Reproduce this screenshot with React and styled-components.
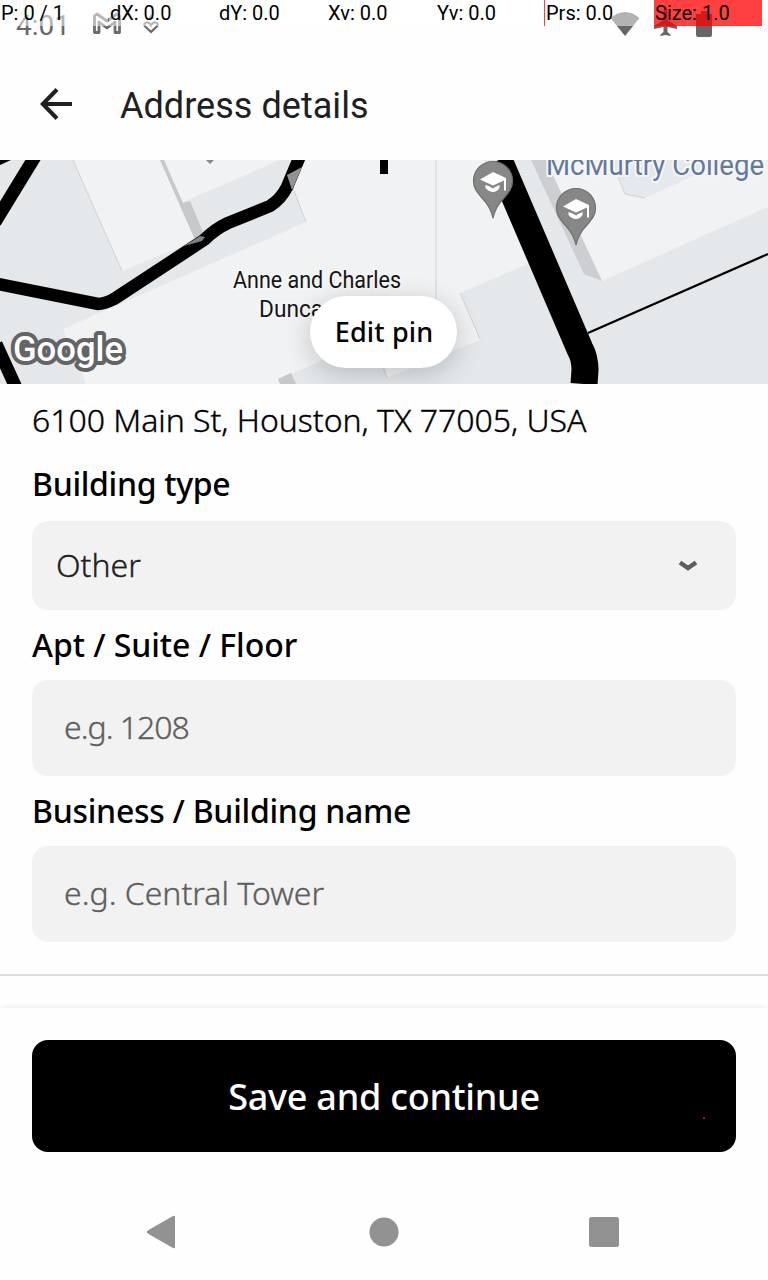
import React from "react";
import styled, { createGlobalStyle } from "styled-components";

const Global = createGlobalStyle`
  * { box-sizing: border-box; }
  body { margin: 0; background: #fefefe; }
  button { font: inherit; border: 0; margin: 0; padding: 0; }
`;

const Screen = styled.div`
  width: 768px;
  height: 1280px;
  display: flex;
  flex-direction: column;
  position: relative;
  overflow: hidden;
  background: #fefefe;
  color: #000;
  font-family: "Noto Sans", "Open Sans", sans-serif;
`;

const StatusBar = styled.div`
  height: 48px;
  display: flex;
  align-items: flex-start;
  justify-content: space-between;
  flex: none;
  padding: 0 54px 0 16px;
  color: #666;
`;

const StatusGroup = styled.div`
  display: flex;
  align-items: flex-start;
`;

const Clock = styled.span`
  font: 400 28px/33px Roboto, sans-serif;
  width: 76px;
  padding-top: 9px;
`;

const PointerBar = styled.div`
  position: absolute;
  inset: 0 0 auto 0;
  height: 26px;
  display: flex;
  gap: 1px;
`;

const PointerCell = styled.div`
  width: 108px;
  height: 26px;
  padding: 1px 0 0 1px;
  background: ${(p) => (p.$hot ? "rgba(255,0,0,.75)" : "rgba(255,255,255,.5)")};
  box-shadow: ${(p) => (p.$edge ? "-1px 0 0 #ff4040" : "none")};
  font: 400 20px/24px Roboto, sans-serif;
  white-space: nowrap;
`;

const Header = styled.header`
  height: 112px;
  flex: none;
  display: flex;
  align-items: center;
  padding: 0 40px;
  gap: 48px;
`;

const Title = styled.h1`
  margin: 4px 0 0;
  font: 400 36px/42px Roboto, sans-serif;
  letter-spacing: 0.04px;
  color: #202020;
`;

const MapView = styled.section`
  height: 224px;
  flex: none;
  position: relative;
  overflow: hidden;
  display: flex;
  justify-content: center;
  align-items: flex-end;
  padding: 0 1px 16px 0;
`;

const MapDrawing = styled.svg`
  position: absolute;
  inset: 0;
  display: block;
`;

const EditPin = styled.button`
  position: relative;
  width: 147px;
  height: 72px;
  padding: 0 0 2px 1px;
  border-radius: 36px;
  background: #fff;
  box-shadow: 0 6px 28px rgba(0, 0, 0, 0.2);
  font-size: 27px;
  font-weight: 500;
  letter-spacing: 0.15px;
  color: #000;
`;

const Form = styled.main`
  flex: none;
  height: 592px;
  padding: 14px 32px 0;
  display: flex;
  flex-direction: column;
  border-bottom: 2px solid #dedede;
`;

const Address = styled.p`
  margin: 0 0 20px;
  font-size: 32px;
  line-height: 44px;
  font-weight: 300;
  letter-spacing: -0.03px;
  -webkit-text-stroke: 0.35px currentColor;
  white-space: nowrap;
`;

const Label = styled.label`
  display: block;
  height: 44px;
  font-size: 32px;
  line-height: 44px;
  font-weight: 500;
  letter-spacing: ${(p) => p.$track};
  white-space: nowrap;
`;

const Field = styled.div`
  height: ${(p) => p.$height}px;
  margin: ${(p) => p.$margin};
  padding: ${(p) => p.$pad};
  border-radius: 16px;
  background: #f2f2f2;
  color: ${(p) => p.$color};
  display: flex;
  align-items: center;
  justify-content: space-between;
  font-size: 32px;
  font-weight: 300;
  letter-spacing: ${(p) => p.$track};
  -webkit-text-stroke: 0.35px currentColor;
`;

const Footer = styled.footer`
  flex: none;
  height: 184px;
  margin-top: 32px;
  padding: 32px;
  box-shadow: 0 -3px 4px -1px rgba(0, 0, 0, 0.06);
`;

const SaveButton = styled.button`
  display: block;
  width: 704px;
  height: 112px;
  border-radius: 16px;
  background: #000;
  color: #fff;
  font-size: 36px;
  font-weight: 500;
  letter-spacing: -0.24px;
`;

const TouchDot = styled.i`
  position: absolute;
  left: 703px;
  top: 1117px;
  width: 2px;
  height: 2px;
  background: #a51414;
`;

const NavBar = styled.nav`
  flex: 1;
  display: flex;
  justify-content: space-between;
  align-items: center;
  padding: 0 149px 8px 147px;
`;

function Pin({ x, y }) {
  return (
    <g transform={`translate(${x} ${y})`}>
      <path d="M0 36C-2 27-5 22-11 16C-16 10-19.500 6-19.500-1A19.500 19.500 0 0 1 19.500-1C19.500 6 16 10 11 16C5 22 2 27 0 36Z" fill="#878787" stroke="#6f6f6f" strokeWidth="1.200" />
      <path d="M-13-2.500L0-10L13-4V8.500H11V-1.500L0 3.500Z" fill="#fff" />
      <path d="M-7.500 3Q-4 3.500 0 6.500Q3 4 6.500 3V6Q4 10 0 10T-7.500 6Z" fill="#fff" />
    </g>
  );
}

function CampusMap() {
  return (
    <MapDrawing width="768" height="224" viewBox="0 160 768 224">
      <rect y="160" width="768" height="224" fill="#f1f2f4" />
      {/* lawns */}
      <path d="M0 160H73L122 271L204 237L183 202L280 160H303L288 175L306 222L63 329L86 384H0Z" fill="#e4e8eb" />
      <path d="M278 379L385 337L480 340L460 293L529 263L484 160H535L602 281L768 207V384H280Z" fill="#e4e8eb" />
      <path d="M484 160L529 263L460 293L480 340L387 378L382 365L278 379L278 330L430 300V160Z" fill="#f1f2f4" />
      <path d="M278 379L382 336L387 378L480 340L502 384H280Z" fill="#e4e8eb" />
      <path d="M612 160L625 194L645 198L728 160Z" fill="#e5e9eb" />
      <path d="M73 160L122 271M288 175L306 222M436 160V300M460 293L480 339M387 378L382 365M617 174L625 194L645 198" fill="none" stroke="#c3c6c9" strokeWidth=".7" />
      {/* building walls */}
      <path d="M278 379L291 373L296 384H280Z" fill="#c6c8ca" />
      <path d="M531 160H546L602 281L584 274Z" fill="#cdced1" />
      <path d="M160 160H164L183 203L190 201L205 237L195 240Z" fill="#c6c8ca" />
      {/* roads */}
      <g fill="none" stroke="#000">
        <path d="M-2 284L98 304Q104 304 114 299L204 240Q215 229 228 223L270 206Q281 199 287 187L300 156" strokeWidth="12.500" />
        <path d="M-5 222L36 155M-4 344L18 392" strokeWidth="13" />
        <path d="M499 160L580 349Q585 358 585 370L584 384" strokeWidth="27" />
        <path d="M588 333L768 254" strokeWidth="2.200" />
      </g>
      <path d="M0 160H11L0 165ZM380 160h8v14h-8Z" />
      <path d="M287 175L302 167L292 190Z" fill="#929294" />
      <path d="M184 246L200 236L205 237L202 241Z" fill="#7d7e80" />
      <path d="M206 160H214L210 164Z" fill="#8a8a8a" />
      <Pin x={493} y={182} />
      <Pin x={576} y={209} />
      <g fontFamily="Roboto, sans-serif" paintOrder="stroke" stroke="#f5f6f7" strokeWidth="4" strokeLinejoin="round">
        <text x="546" y="175" fontSize="29" fill="#64789f" textLength="218" lengthAdjust="spacingAndGlyphs">McMurtry College</text>
        <text x="233" y="288" fontSize="24.500" fill="#151515" textLength="168" lengthAdjust="spacingAndGlyphs">Anne and Charles</text>
        <text x="259" y="317" fontSize="24.500" fill="#151515" textLength="122" lengthAdjust="spacingAndGlyphs">Duncan Hall</text>
      </g>
      <text x="13" y="361" fontFamily="Roboto, sans-serif" fontSize="35" fontWeight="500" fill="#fff" stroke="#636466" strokeWidth="8" strokeLinejoin="round" paintOrder="stroke" textLength="110" lengthAdjust="spacingAndGlyphs">Google</text>
    </MapDrawing>
  );
}

function NotificationIcons() {
  return (
    <svg width="68" height="40" viewBox="92 0 68 40" fill="none" stroke="#6c6c6c">
      <path d="M94.500 16V32.500H99V22L107 28L115 22V32.500H119.500V16L117 14L107 21L97 14Z" strokeWidth="2.800" strokeLinejoin="round" />
      <path d="M151 32L144.800 26Q143.500 23 146.500 22.500Q149 22 151 25Q153 22 155.500 22.500Q158.500 23 157.200 26Z" strokeWidth="2.200" />
      <path d="M148 19L151 14L154 19Z" fill="#6c6c6c" stroke="none" />
    </svg>
  );
}

function SystemIcons() {
  return (
    <svg width="104" height="40" viewBox="610 0 104 40">
      <path d="M610.500 18Q625 6 639.500 18L625 36Z" fill="#666" />
      <path d="M663.500 10Q665.500 7 667.500 10V20L677 26V29L667.500 27V32L670.500 34.500V36L665.500 35L660.500 36V34.500L663.500 32V27L654 29V26L663.500 20Z" fill="#666" />
      <path d="M696 14H701V11H707V14H712V35Q712 37 710 37H698Q696 37 696 35Z" fill="#666" />
    </svg>
  );
}

const pointerCells = [
  { text: "P: 0 / 1" },
  { text: "dX: 0.0" },
  { text: "dY: 0.0" },
  { text: "Xv: 0.0" },
  { text: "Yv: 0.0" },
  { text: "Prs: 0.0", edge: true },
  { text: "Size: 1.0", hot: true },
];

export default function App() {
  return (
    <Screen>
      <Global />
      <StatusBar>
        <StatusGroup>
          <Clock>4:01</Clock>
          <NotificationIcons />
        </StatusGroup>
        <SystemIcons />
      </StatusBar>
      <PointerBar>
        {pointerCells.map((c) => (
          <PointerCell key={c.text} $hot={c.hot} $edge={c.edge}>{c.text}</PointerCell>
        ))}
      </PointerBar>
      <Header>
        <svg width="32" height="32" viewBox="0 0 32 32" fill="none" stroke="#202020" strokeWidth="4">
          <path d="M32 16H3M17 1.500L2.800 16L17 30.500" />
        </svg>
        <Title>Address details</Title>
      </Header>
      <MapView>
        <CampusMap />
        <EditPin>Edit pin</EditPin>
      </MapView>
      <Form>
        <Address>6100 Main St, Houston, TX 77005, USA</Address>
        <Label $track="-0.3px">Building type</Label>
        <Field $height={89} $margin="15px 0 13px" $pad="0 38px 2px 24px" $color="#202020" $track="0px">
          Other
          <svg width="20" height="14" viewBox="0 0 20 14" fill="none" stroke="#5e5e5e" strokeWidth="4.500">
            <path d="M2 4.500L10 10L18 4.500" />
          </svg>
        </Field>
        <Label $track="-0.05px">Apt / Suite / Floor</Label>
        <Field $height={96} $margin="13px 0 13px" $pad="0 32px 4px" $color="#5e5e5e" $track="-1px">e.g. 1208</Field>
        <Label $track="-0.27px">Business / Building name</Label>
        <Field $height={96} $margin="13px 0 0" $pad="0 32px 4px" $color="#5e5e5e" $track="0px">e.g. Central Tower</Field>
      </Form>
      <Footer>
        <SaveButton>Save and continue</SaveButton>
      </Footer>
      <TouchDot />
      <NavBar>
        <svg width="30" height="34" viewBox="0 0 30 34" fill="#929292">
          <path d="M.700 15.500L26 1Q28 0 28 2V32Q28 34 26 33L.700 18.500Q-1 17 .700 15.500Z" />
        </svg>
        <svg width="32" height="30" viewBox="0 0 32 30" fill="#929292"><circle cx="17" cy="15" r="14.600" /></svg>
        <svg width="30" height="30" viewBox="0 0 30 30" fill="#929292"><rect width="30" height="30" rx="2.500" /></svg>
      </NavBar>
    </Screen>
  );
}
